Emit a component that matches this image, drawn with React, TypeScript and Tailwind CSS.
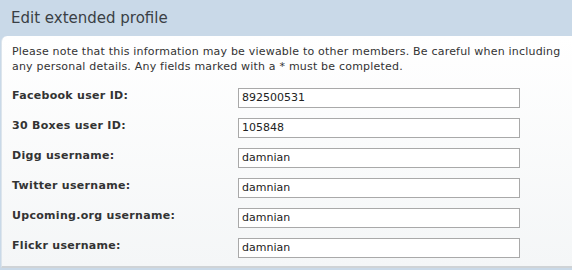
import React from "react";

const rows = [
  { label: "Facebook user ID:", value: "892500531" },
  { label: "30 Boxes user ID:", value: "105848" },
  { label: "Digg username:", value: "damnian" },
  { label: "Twitter username:", value: "damnian" },
  { label: "Upcoming.org username:", value: "damnian" },
  { label: "Flickr username:", value: "damnian" },
];

export default function App() {
  return (
    <div
      className="w-[572px] h-[270px] bg-[#c9d9e8] flex flex-col overflow-hidden text-[#333]"
      style={{ fontFamily: '"DejaVu Sans", Verdana, sans-serif' }}
    >
      <div className="h-[36px] pl-[11px] pt-[8px] text-[15px] leading-[20px] text-[#3a3f45]">
        Edit extended profile
      </div>
      <div className="ml-[1px] h-[232px] rounded-tl-[6px] bg-gradient-to-b from-[#ffffff] to-[#f4f6f7] border-b-2 border-[#cfd3d6] border-l border-l-[#dde5ec] pl-[10px] pt-[8px]">
        <p className="text-[11px] leading-[15px] text-[#333] tracking-[0.2px] whitespace-nowrap">
          Please note that this information may be viewable to other members. Be careful when including
          <br />
          any personal details. Any fields marked with a * must be completed.
        </p>
        <div className="mt-[14px] flex flex-col gap-[10px]">
          {rows.map((r) => (
            <div key={r.label} className="flex items-start h-[20px]">
              <div className="w-[226px] text-[11px] font-bold leading-[15px] text-[#333] tracking-[0.3px]">
                {r.label}
              </div>
              <div className="w-[282px] h-[20px] bg-white border border-[#a9a9a9] pl-[3px] text-[11px] leading-[18px] text-[#222]">
                {r.value}
              </div>
            </div>
          ))}
        </div>
      </div>
    </div>
  );
}
